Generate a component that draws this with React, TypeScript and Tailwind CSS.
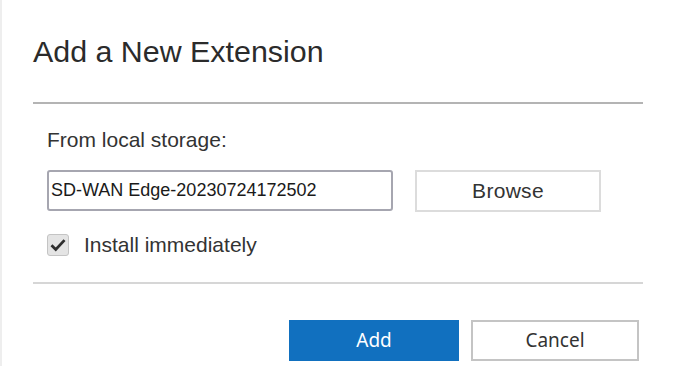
export default function App() {
  return (
    <div className="w-[675px] h-[366px] overflow-hidden bg-white border-l-2 border-[#eeeeee] pl-[31px] pr-[32px] font-['Liberation_Sans',Arial,sans-serif] text-[#333]">
      <h1 className="pt-[33px] text-[30.4px] leading-[36px] font-normal text-[#2b2b2b]">
        Add a New Extension
      </h1>
      <div className="mt-[33px] h-[2px] bg-[#b4b4b4]" />

      <div className="pl-[14px]">
        <p className="mt-[24px] text-[21px] leading-[24px]">From local storage:</p>

        <div className="mt-[18px] flex items-start">
          <div className="w-[346px] h-[41px] border-2 border-[#a6a6b0] rounded-[3px] flex items-center pl-[2px] text-[18px] text-[#1a1a1a]">
            SD-WAN Edge-20230724172502
          </div>
          <button className="ml-[22px] w-[186px] h-[42px] border-2 border-[#dcdcdc] bg-white text-[21px] text-[#333] tracking-[0.3px]">
            Browse
          </button>
        </div>

        <div className="mt-[21px] flex items-center h-[23px]">
          <div className="w-[22px] h-[22px] rounded-[3px] border border-[#c4c4c4] bg-[#e4e4e4] flex items-center justify-center">
            <svg width="18" height="18" viewBox="0 0 16 16">
              <path d="M2.2 8.2 L6 12 L13.8 3.6" fill="none" stroke="#2e2e2e" strokeWidth="2.4" />
            </svg>
          </div>
          <span className="ml-[15px] text-[21px] leading-[23px]">Install immediately</span>
        </div>
      </div>

      <div className="mt-[26px] h-[2px] bg-[#d6d6d6]" />

      <div className="mt-[36px] flex justify-end pr-[4px] gap-[12px] font-['Noto_Sans',sans-serif] text-[19px]">
        <button className="w-[170px] h-[41px] bg-[#1170bf] text-white">Add</button>
        <button className="w-[168px] h-[41px] border-2 border-[#c4c4c4] bg-white text-[#333]">Cancel</button>
      </div>
    </div>
  );
}
